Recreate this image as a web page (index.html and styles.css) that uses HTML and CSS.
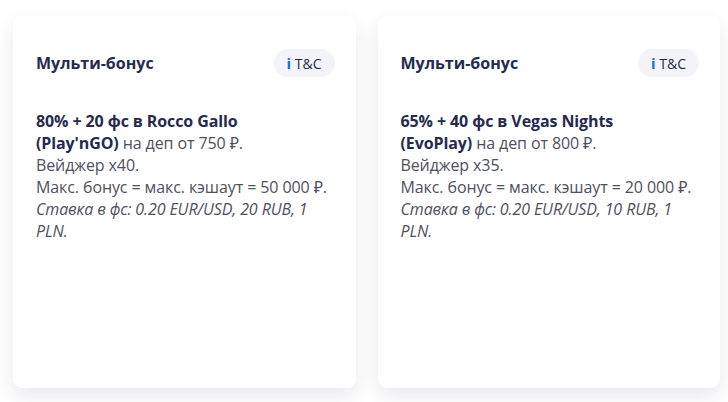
FILE: index.html
```html
<!DOCTYPE html>
<html lang="ru">
  <head>
    <meta charset="UTF-8" />
    <meta name="viewport" content="width=device-width, initial-scale=1.0" />
    <title>Бонусы</title>
    <link rel="stylesheet" href="styles.css">
  </head>
  <body>
    <div id="bonuses">
      <div class="card">
        <div class="card-head">
          <h3 class="card-title">Мульти-бонус</h3>
          <div class="tc"><span class="tc-i">i</span> T&amp;C</div>
        </div>
        <p class="card-text">
          <b>80% + 20 фс в Rocco Gallo<br>(Play'nGO)</b> на деп от 750 ₽.<br>
          Вейджер x40.<br>
          Макс. бонус = макс. кэшаут = 50 000 ₽.<br>
          <i>Ставка в фс: 0.20 EUR/USD, 20 RUB, 1<br>PLN.</i>
        </p>
      </div>
      <div class="card">
        <div class="card-head">
          <h3 class="card-title">Мульти-бонус</h3>
          <div class="tc"><span class="tc-i">i</span> T&amp;C</div>
        </div>
        <p class="card-text">
          <b>65% + 40 фс в Vegas Nights<br>(EvoPlay)</b> на деп от 800 ₽.<br>
          Вейджер x35.<br>
          Макс. бонус = макс. кэшаут = 20 000 ₽.<br>
          <i>Ставка в фс: 0.20 EUR/USD, 10 RUB, 1<br>PLN.</i>
        </p>
      </div>
    </div>
  </body>
</html>
```

FILE: styles.css
```css
  body {
    margin: 0;
    background-color: #ffffff;
    font-family: "Open Sans", "Noto Sans", sans-serif;
  }
  #bonuses {
    display: flex;
    gap: 22px;
    padding: 16px 8px 14px 13px;
  }
  .card {
    width: 343px;
    height: 372px;
    box-sizing: border-box;
    padding: 33px 22px 20px 23px;
    background-color: #ffffff;
    border-radius: 9px;
    box-shadow: 0 8px 20px rgba(40, 40, 80, 0.1);
  }
  .card-head {
    display: flex;
    align-items: center;
    justify-content: space-between;
  }
  .card-title {
    margin: 0;
    font-size: 16px;
    font-weight: 700;
    color: #262a4f;
  }
  .tc {
    height: 28px;
    padding: 0 13px;
    border-radius: 14px;
    background-color: #f2f4f8;
    color: #262a4f;
    font-size: 14px;
    line-height: 28px;
    margin-right: -1px;
  }
  .tc-i {
    color: #1a6fd6;
    font-weight: 700;
    font-size: 15px;
  }
  .card-text {
    margin: 33px 0 0 0;
    font-size: 16px;
    line-height: 22px;
    letter-spacing: -0.1px;
    color: #4f505d;
    white-space: nowrap;
  }
  .card-text b {
    color: #262a4f;
  }
```
